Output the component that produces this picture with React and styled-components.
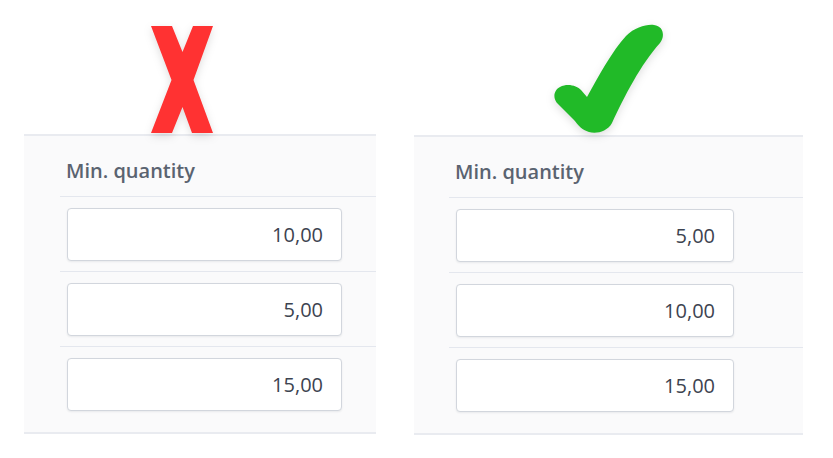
import React from "react";
import styled, { createGlobalStyle } from "styled-components";

const Global = createGlobalStyle`
  html, body { margin: 0; padding: 0; background: #ffffff; }
  body { font-family: "Open Sans", "Noto Sans", sans-serif; }
  * { box-sizing: border-box; }
`;

const Page = styled.div`
  display: flex;
  align-items: flex-start;
  gap: 38px;
  padding-left: 24px;
  width: 833px;
  height: 458px;
  overflow: hidden;
`;

const Column = styled.div`
  display: flex;
  flex-direction: column;
  width: ${(p) => p.$width}px;
`;

const MarkArea = styled.div`
  height: ${(p) => p.$height}px;
  position: relative;
  z-index: 1;
  svg {
    display: block;
    overflow: visible;
    filter: drop-shadow(0 3px 4px rgba(0, 0, 0, 0.13));
  }
`;

const Panel = styled.div`
  background: #fafafb;
  border-top: 2px solid #e9ebf0;
  border-bottom: 2px solid #e9ebf0;
  padding-left: ${(p) => p.$inset}px;
  padding-bottom: 11px;
`;

const HeaderCell = styled.div`
  padding: 22px 6px 12px;
  font-size: 20px;
  line-height: 26px;
  font-weight: 600;
  color: #5a6370;
  border-bottom: 1px solid #e4e7ee;
`;

const Row = styled.div`
  padding: 11px 7px 10px;
  border-bottom: ${(p) => (p.$last ? "none" : "1px solid #e4e7ee")};
`;

const ValueInput = styled.input`
  display: block;
  width: ${(p) => p.$width}px;
  height: 53px;
  padding: 0 18px 0 10px;
  border: 1px solid #d2d6dd;
  border-radius: 4px;
  background: #ffffff;
  box-shadow: 0 1px 2px rgba(30, 40, 60, 0.08);
  font-family: "Open Sans", "Noto Sans", sans-serif;
  font-size: 20px;
  color: #3d4350;
  text-align: right;
  outline: none;
`;

function Table({ values, inset, inputWidth }) {
  return (
    <Panel $inset={inset}>
      <HeaderCell>Min. quantity</HeaderCell>
      {values.map((v, i) => (
        <Row key={i} $last={i === values.length - 1}>
          <ValueInput $width={inputWidth} defaultValue={v} readOnly />
        </Row>
      ))}
    </Panel>
  );
}

const CrossMark = () => (
  <svg width="352" height="134" viewBox="24 0 352 134">
    <polygon
      fill="#ff3232"
      points="151,26 172,26 182.5,52 193,26 213,26 193.5,80 213,133 192,133 182.5,107 172,133 151,133 171.5,80"
    />
  </svg>
);

const CheckMark = () => (
  <svg width="389" height="135" viewBox="414 0 389 135">
    <path
      fill="#21ba28"
      d="M587,97 C599,75 613,50 626,36 C635,27 647,24 654,25 C664,26 665,37 660,43 C641,64 624,97 612,123 C607,132 596,134 589,132 C582,130 578,125 574,120 L558,104 C552,98 554,90 560,87 C568,83 577,86 581,90 Z"
    />
  </svg>
);

export default function App() {
  return (
    <>
      <Global />
      <Page>
        <Column $width={352}>
          <MarkArea $height={134}>
            <CrossMark />
          </MarkArea>
          <Table values={["10,00", "5,00", "15,00"]} inset={36} inputWidth={275} />
        </Column>
        <Column $width={389}>
          <MarkArea $height={135}>
            <CheckMark />
          </MarkArea>
          <Table values={["5,00", "10,00", "15,00"]} inset={35} inputWidth={278} />
        </Column>
      </Page>
    </>
  );
}
